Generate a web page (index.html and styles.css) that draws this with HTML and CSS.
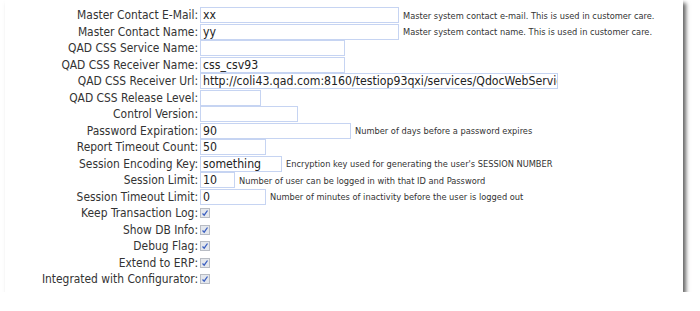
FILE: index.html
```html
<!DOCTYPE html>
<html lang="en">
<head>
    <meta charset="UTF-8">
    <title>Settings</title>
    <link rel="stylesheet" href="styles.css">
</head>
<body>
    <div class="panel">
        <div class="row"><div class="lbl">Master Contact E-Mail:</div><div class="inp w199">xx</div><div class="desc">Master system contact e-mail. This is used in customer care.</div></div>
        <div class="row"><div class="lbl">Master Contact Name:</div><div class="inp w199">yy</div><div class="desc">Master system contact name. This is used in customer care.</div></div>
        <div class="row"><div class="lbl">QAD CSS Service Name:</div><div class="inp w145"></div></div>
        <div class="row"><div class="lbl">QAD CSS Receiver Name:</div><div class="inp w145">css_csv93</div></div>
        <div class="row"><div class="lbl">QAD CSS Receiver Url:</div><div class="inp w358">http://coli43.qad.com:8160/testiop93qxi/services/QdocWebService</div></div>
        <div class="row"><div class="lbl">QAD CSS Release Level:</div><div class="inp w61"></div></div>
        <div class="row"><div class="lbl">Control Version:</div><div class="inp w98"></div></div>
        <div class="row"><div class="lbl">Password Expiration:</div><div class="inp w151">90</div><div class="desc">Number of days before a password expires</div></div>
        <div class="row"><div class="lbl">Report Timeout Count:</div><div class="inp w66">50</div></div>
        <div class="row"><div class="lbl">Session Encoding Key:</div><div class="inp w82">something</div><div class="desc">Encryption key used for generating the user's SESSION NUMBER</div></div>
        <div class="row"><div class="lbl">Session Limit:</div><div class="inp w35">10</div><div class="desc">Number of user can be logged in with that ID and Password</div></div>
        <div class="row"><div class="lbl">Session Timeout Limit:</div><div class="inp w66">0</div><div class="desc">Number of minutes of inactivity before the user is logged out</div></div>
        <div class="row"><div class="lbl">Keep Transaction Log:</div><span class="chk"><svg width="8" height="8" viewBox="0 0 8 8"><path d="M1.5 4.5 L3.2 6.2 L6.5 1.5" fill="none" stroke="#3b5fc0" stroke-width="1.3"/></svg></span></div>
        <div class="row"><div class="lbl">Show DB Info:</div><span class="chk"><svg width="8" height="8" viewBox="0 0 8 8"><path d="M1.5 4.5 L3.2 6.2 L6.5 1.5" fill="none" stroke="#3b5fc0" stroke-width="1.3"/></svg></span></div>
        <div class="row"><div class="lbl">Debug Flag:</div><span class="chk"><svg width="8" height="8" viewBox="0 0 8 8"><path d="M1.5 4.5 L3.2 6.2 L6.5 1.5" fill="none" stroke="#3b5fc0" stroke-width="1.3"/></svg></span></div>
        <div class="row"><div class="lbl">Extend to ERP:</div><span class="chk"><svg width="8" height="8" viewBox="0 0 8 8"><path d="M1.5 4.5 L3.2 6.2 L6.5 1.5" fill="none" stroke="#3b5fc0" stroke-width="1.3"/></svg></span></div>
        <div class="row"><div class="lbl">Integrated with Configurator:</div><span class="chk"><svg width="8" height="8" viewBox="0 0 8 8"><path d="M1.5 4.5 L3.2 6.2 L6.5 1.5" fill="none" stroke="#3b5fc0" stroke-width="1.3"/></svg></span></div>
    </div>
</body>
</html>
```
FILE: styles.css
```css
body {
    margin: 0px;
    background-color: #ffffff;
}

* {
    font-family: 'DejaVu Sans Condensed', 'DejaVu Sans', sans-serif;
}

.panel {
    margin-left: 5px;
    width: 678px;
    height: 292px;
    padding-top: 7px;
    box-sizing: border-box;
    background-color: #ffffff;
    box-shadow: rgba(0, 0, 0, 0.6) 3px 3px 4px;
}

.row {
    display: flex;
    align-items: center;
    height: 16.5px;
}

.lbl {
    width: 195px;
    text-align: right;
    font-size: 11.9px;
    color: #333333;
    padding-right: 2px;
    box-sizing: border-box;
    flex-shrink: 0;
    white-space: nowrap;
}

.inp {
    height: 16px;
    box-sizing: border-box;
    border: 1px solid #c6d4f2;
    font-size: 12.2px;
    color: #222222;
    padding-left: 2px;
    line-height: 14px;
    overflow: hidden;
    white-space: nowrap;
    flex-shrink: 0;
}

.w199 { width: 199px; }
.w145 { width: 145px; }
.w358 { width: 358px; }
.w61 { width: 61px; }
.w98 { width: 98px; }
.w151 { width: 151px; }
.w66 { width: 66px; }
.w82 { width: 82px; }
.w35 { width: 35px; }

.desc {
    font-size: 9.2px;
    color: #333333;
    margin-left: 4px;
    white-space: nowrap;
}

.chk {
    width: 10px;
    height: 10px;
    box-sizing: border-box;
    border: 1px solid #b8bcc4;
    background-color: #e4e7ec;
    display: flex;
    align-items: center;
    justify-content: center;
}
```
